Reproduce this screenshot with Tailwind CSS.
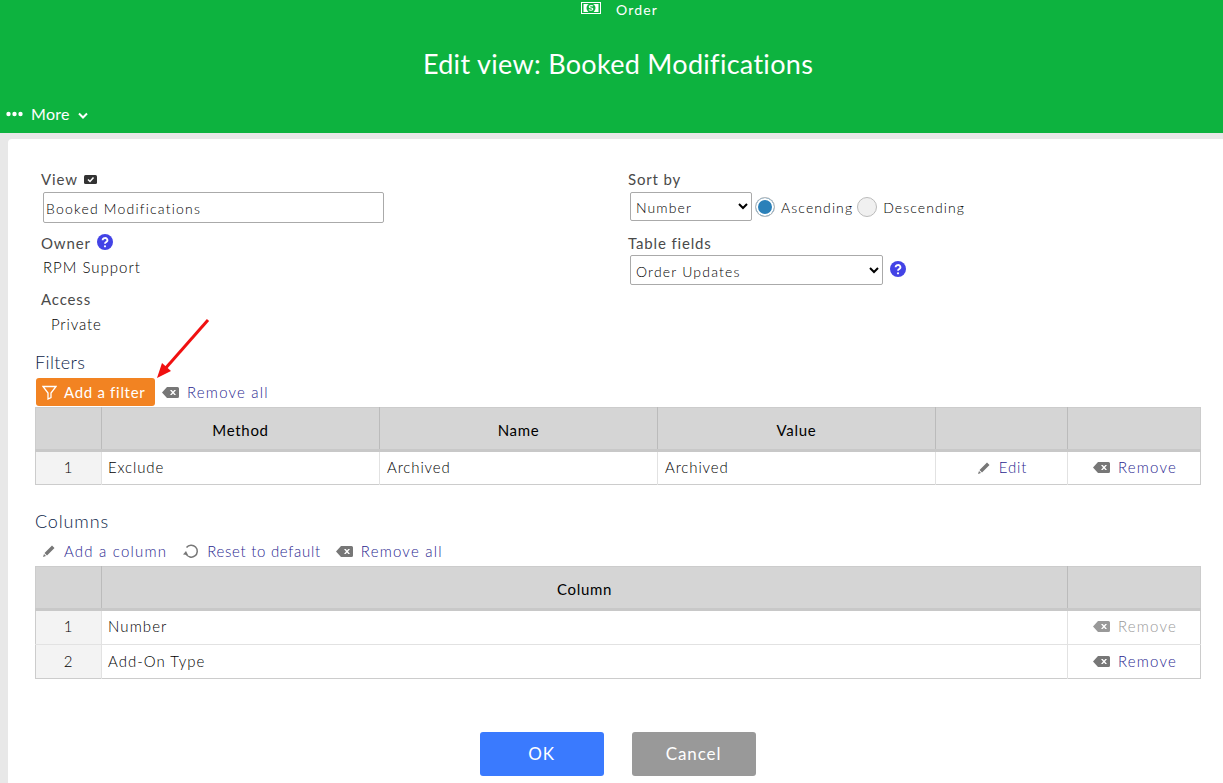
<!DOCTYPE html>
<html lang="en">

<head>
    <meta charset="UTF-8">
    <meta name="viewport" content="width=device-width, initial-scale=1.0">
    <title>Edit view</title>
    <script src="https://cdn.jsdelivr.net/npm/@tailwindcss/browser@4"></script>
</head>

<body class="bg-[#e8e8e8] font-['Lato','Liberation_Sans',sans-serif] font-light text-[15px] tracking-[0.85px] text-black h-[783px] overflow-hidden relative">
    <!-- green header -->
    <header class="bg-[#0db33f] h-[133px] text-white flex flex-col">
        <div class="h-[19px] flex items-center justify-center gap-[15px] text-[14px] font-normal tracking-[1.2px] pl-[16px]">
            <svg width="20" height="13" viewBox="0 0 20 13" class="mb-[3px]">
                <rect x="0.5" y="0.5" width="19" height="11" fill="none" stroke="white" />
                <rect x="2.5" y="2" width="15" height="8" fill="white" />
                <circle cx="10" cy="6" r="4.500" fill="#0db33f" />
                <path d="M12 4.200c-.5-.7-3.700-1-3.700.7 0 1.600 3.500.6 3.500 2.200 0 1.600-3.200 1.300-3.900.6" fill="none" stroke="white" stroke-width="1.200" />
            </svg>
            <span>Order</span>
        </div>
        <h1 class="text-[27px] leading-[34px] text-center font-normal tracking-[0.3px] mt-[28px] pl-[13px]">Edit view: Booked Modifications</h1>
        <div class="flex items-center mt-[21px] pl-[6px] text-[16px] font-normal tracking-[0.3px]">
            <svg width="17" height="6" viewBox="0 0 17 6" fill="white">
                <circle cx="2.500" cy="3" r="2.200" />
                <circle cx="8.500" cy="3" r="2.200" />
                <circle cx="14.500" cy="3" r="2.200" />
            </svg>
            <span class="ml-[8px]">More</span>
            <svg width="10" height="7" viewBox="0 0 10 7" class="ml-[8px] mt-[2px]" fill="none" stroke="white" stroke-width="2">
                <path d="M1 1.500l4 4 4-4" />
            </svg>
        </div>
    </header>

    <main class="bg-white ml-[8px] mt-[6px] rounded-tl-[4px] h-[644px] pt-[30px] pl-[27px] pr-[22px]">
        <div class="grid grid-cols-[593px_1fr] h-[172px]">
            <div class="pl-[6px]">
                <div class="flex items-center gap-[6px] h-[20px] font-normal text-[#4a4a4a]">
                    View
                    <svg width="13" height="9" viewBox="0 0 13 9">
                        <rect width="13" height="9" rx="1.500" fill="#333" />
                        <path d="M4 4.500l2 2 3.500-4" fill="none" stroke="white" stroke-width="1.500" />
                    </svg>
                </div>
                <input type="text" value="Booked Modifications" class="block ml-[2px] mt-[3px] w-[341px] h-[31px] border border-[#aaa] rounded-[2px] px-[2px] pt-[2px] text-[14px] tracking-[1.2px] text-black">
                <div class="flex items-center gap-[6px] h-[20px] mt-[10px] font-normal text-[#4a4a4a]">
                    Owner
                    <svg width="16" height="16" viewBox="0 0 16 16" class="mb-[2px]">
                        <circle cx="8" cy="8" r="8" fill="#4343e6" />
                        <path d="M5.600 6.200a2.400 2.200 0 1 1 3.600 1.900c-.8.500-1.200.9-1.200 1.700" fill="none" stroke="white" stroke-width="1.800" />
                        <circle cx="8" cy="12.300" r="1.100" fill="white" />
                    </svg>
                </div>
                <div class="ml-[2px] mt-[4px] h-[20px] leading-[20px] tracking-[1px]">RPM Support</div>
                <div class="h-[20px] leading-[20px] mt-[12px] font-normal text-[#4a4a4a]">Access</div>
                <div class="ml-[10px] mt-[5px] h-[20px] leading-[20px]">Private</div>
            </div>
            <div>
                <div class="h-[20px] leading-[20px] font-normal text-[#4a4a4a]">Sort by</div>
                <div class="flex items-center mt-[3px] h-[29px] text-[14px] tracking-[1.1px]">
                    <select class="ml-[2px] w-[122px] h-[29px] border border-[#aaa] rounded-[2px] bg-white pl-[1px] pt-[2px] text-[14px]">
                        <option>Number</option>
                    </select>
                    <input type="radio" name="sort" checked class="appearance-none ml-[3px] w-[20px] h-[20px] rounded-full border border-[#bbb] bg-[#2a80b9] shadow-[inset_0_0_0_2px_white]">
                    <span class="ml-[6px] pt-[1px]">Ascending</span>
                    <input type="radio" name="sort" class="appearance-none ml-[4px] w-[20px] h-[20px] rounded-full border border-[#bbb] bg-[#f0f0f0]">
                    <span class="ml-[6px] pt-[1px]">Descending</span>
                </div>
                <div class="h-[20px] leading-[20px] mt-[12px] font-normal text-[#4a4a4a]">Table fields</div>
                <div class="flex items-center mt-[2px] h-[30px]">
                    <select class="ml-[2px] w-[253px] h-[30px] border border-[#aaa] rounded-[2px] bg-white pl-[1px] pt-[2px] text-[14px] tracking-[1.2px]">
                        <option>Order Updates</option>
                    </select>
                    <svg width="16" height="16" viewBox="0 0 16 16" class="ml-[7px] mb-[2px]">
                        <circle cx="8" cy="8" r="8" fill="#4343e6" />
                        <path d="M5.600 6.200a2.400 2.200 0 1 1 3.600 1.900c-.8.500-1.200.9-1.200 1.700" fill="none" stroke="white" stroke-width="1.800" />
                        <circle cx="8" cy="12.300" r="1.100" fill="white" />
                    </svg>
                </div>
            </div>
        </div>

        <!-- filters -->
        <h2 class="text-[18px] leading-[22px] mt-[10px] text-[#0a2348] tracking-[0.4px]">Filters</h2>
        <div class="flex items-center h-[28px] mt-[5px]">
            <button class="ml-[1px] w-[119px] h-[28px] bg-[#f28322] text-white font-normal tracking-[0.7px] rounded-[3px] flex items-center pl-[6px] gap-[7px]">
                <svg width="15" height="15" viewBox="0 0 15 15" fill="none" stroke="white" stroke-width="1.300">
                    <path d="M1 1.500h13L9 8v4.500l-3 1.500V8z" />
                </svg>
                Add a filter
            </button>
            <svg width="17" height="11" viewBox="0 0 17 11" class="ml-[7px]">
                <path fill="#777" fill-rule="evenodd" d="M5 0h10.500A1.500 1.500 0 0 1 17 1.500v8a1.500 1.500 0 0 1-1.500 1.500H5L0 5.500zM8 3l2 2.500L8 8h1.700l1.300-1.500L12.300 8H14l-2-2.500L14 3h-1.700L11 4.500 9.700 3z" />
            </svg>
            <a class="ml-[8px] text-[#2a1f8f] tracking-[1.2px]">Remove all</a>
        </div>
        <table class="table-fixed border-collapse w-[1165px] mt-[1px] border border-[#ccc]">
            <colgroup>
                <col class="w-[66px]"><col class="w-[278px]"><col class="w-[278px]"><col class="w-[278px]"><col class="w-[132px]"><col class="w-[133px]">
            </colgroup>
            <thead>
                <tr class="h-[43px] bg-[#d5d5d5] border-b-[3px] border-[#c8c8c8] text-black tracking-[0.7px]">
                    <th class="border-r border-[#bbb]"></th>
                    <th class="border-r border-[#bbb] font-normal pt-[3px]">Method</th>
                    <th class="border-r border-[#bbb] font-normal pt-[3px]">Name</th>
                    <th class="border-r border-[#bbb] font-normal pt-[3px]">Value</th>
                    <th class="border-r border-[#bbb]"></th>
                    <th></th>
                </tr>
            </thead>
            <tbody>
                <tr class="h-[34px]">
                    <td class="bg-[#f3f3f3] text-center border-r border-[#e2e2e2] pb-[1px]">1</td>
                    <td class="pl-[6px] border-r border-[#e2e2e2] pb-[1px]">Exclude</td>
                    <td class="pl-[7px] border-r border-[#e2e2e2] pb-[1px]">Archived</td>
                    <td class="pl-[7px] border-r border-[#e2e2e2] pb-[1px]">Archived</td>
                    <td class="border-r border-[#e2e2e2] pb-[1px]">
                        <span class="flex items-center justify-center gap-[8px] text-[#2a1f8f] pl-[1px]">
                            <svg width="14" height="14" viewBox="0 0 14 14"><path fill="#777" d="M10 1.500l2.500 2.500-7.500 7.500-2.500-2.500zM2 10l2 2-3 1z" /></svg>
                            Edit
                        </span>
                    </td>
                    <td class="pb-[1px]">
                        <span class="flex items-center justify-center gap-[8px] text-[#2a1f8f] tracking-[1.2px] pl-[2px]">
                            <svg width="17" height="11" viewBox="0 0 17 11"><path fill="#777" fill-rule="evenodd" d="M5 0h10.500A1.500 1.500 0 0 1 17 1.500v8a1.500 1.500 0 0 1-1.500 1.500H5L0 5.500zM8 3l2 2.500L8 8h1.700l1.300-1.500L12.300 8H14l-2-2.500L14 3h-1.700L11 4.500 9.700 3z" /></svg>
                            Remove
                        </span>
                    </td>
                </tr>
            </tbody>
        </table>

        <!-- columns -->
        <h2 class="text-[18px] leading-[22px] mt-[25px] text-[#0a2348] tracking-[0.85px]">Columns</h2>
        <div class="flex items-center h-[24px] mt-[7px] ml-[7px] text-[#2a1f8f]">
            <svg width="14" height="14" viewBox="0 0 14 14"><path fill="#777" d="M10 1.500l2.500 2.500-7.500 7.500-2.500-2.500zM2 10l2 2-3 1z" /></svg>
            <span class="ml-[8px] tracking-[1.2px]">Add a column</span>
            <svg width="16" height="15" viewBox="0 0 16 15" fill="none" stroke="#777" stroke-width="1.500" class="ml-[16px]">
                <path d="M3.500 3.500A6 6 0 1 1 3 10" />
                <path fill="#777" stroke="none" d="M1 8l5 .5L3 12z" transform="rotate(180 3 9) translate(0 -1)" />
            </svg>
            <span class="ml-[8px] tracking-[0.7px]">Reset to default</span>
            <svg width="17" height="11" viewBox="0 0 17 11" class="ml-[15px]"><path fill="#777" fill-rule="evenodd" d="M5 0h10.500A1.500 1.500 0 0 1 17 1.500v8a1.500 1.500 0 0 1-1.500 1.500H5L0 5.500zM8 3l2 2.500L8 8h1.700l1.300-1.500L12.300 8H14l-2-2.500L14 3h-1.700L11 4.500 9.700 3z" /></svg>
            <span class="ml-[8px] tracking-[1.2px]">Remove all</span>
        </div>
        <table class="table-fixed border-collapse w-[1166px] mt-[3px] border border-[#ccc]">
            <colgroup>
                <col class="w-[66px]"><col><col class="w-[133px]">
            </colgroup>
            <thead>
                <tr class="h-[43px] bg-[#d5d5d5] border-b-[3px] border-[#c8c8c8] text-black tracking-[0.7px]">
                    <th class="border-r border-[#bbb]"></th>
                    <th class="border-r border-[#bbb] font-normal pt-[3px]">Column</th>
                    <th></th>
                </tr>
            </thead>
            <tbody>
                <tr class="h-[35px] border-b border-[#e2e2e2]">
                    <td class="bg-[#f3f3f3] text-center border-r border-[#e2e2e2] pb-[2px]">1</td>
                    <td class="pl-[6px] border-r border-[#e2e2e2] pb-[2px] tracking-[1.1px]">Number</td>
                    <td class="pb-[2px]">
                        <span class="flex items-center justify-center gap-[8px] text-[#999] tracking-[1.2px] pl-[2px]">
                            <svg width="17" height="11" viewBox="0 0 17 11"><path fill="#999" fill-rule="evenodd" d="M5 0h10.500A1.500 1.500 0 0 1 17 1.500v8a1.500 1.500 0 0 1-1.500 1.500H5L0 5.500zM8 3l2 2.500L8 8h1.700l1.300-1.500L12.300 8H14l-2-2.500L14 3h-1.700L11 4.500 9.700 3z" /></svg>
                            Remove
                        </span>
                    </td>
                </tr>
                <tr class="h-[34px]">
                    <td class="bg-[#f3f3f3] text-center border-r border-[#e2e2e2]">2</td>
                    <td class="pl-[6px] border-r border-[#e2e2e2] tracking-[1px]">Add-On Type</td>
                    <td>
                        <span class="flex items-center justify-center gap-[8px] text-[#2a1f8f] tracking-[1.2px] pl-[2px]">
                            <svg width="17" height="11" viewBox="0 0 17 11"><path fill="#777" fill-rule="evenodd" d="M5 0h10.500A1.500 1.500 0 0 1 17 1.500v8a1.500 1.500 0 0 1-1.500 1.500H5L0 5.500zM8 3l2 2.500L8 8h1.700l1.300-1.500L12.300 8H14l-2-2.500L14 3h-1.700L11 4.500 9.700 3z" /></svg>
                            Remove
                        </span>
                    </td>
                </tr>
            </tbody>
        </table>

        <div class="flex justify-center gap-[28px] mt-[53px] pr-[1px]">
            <button class="w-[124px] h-[44px] bg-[#3a7afe] text-white font-normal rounded-[3px] text-[17px] tracking-[0.7px]">OK</button>
            <button class="w-[124px] h-[44px] bg-[#999] text-white font-normal rounded-[3px] text-[17px] tracking-[0.9px]">Cancel</button>
        </div>
    </main>

    <!-- red annotation arrow -->
    <svg class="absolute left-[150px] top-[315px]" width="65" height="70" viewBox="0 0 65 70">
        <path d="M58 5L14 55" stroke="#f01010" stroke-width="3" fill="none" />
        <path d="M7 63l5-15 9 8z" fill="#f01010" />
    </svg>
</body>

</html>
